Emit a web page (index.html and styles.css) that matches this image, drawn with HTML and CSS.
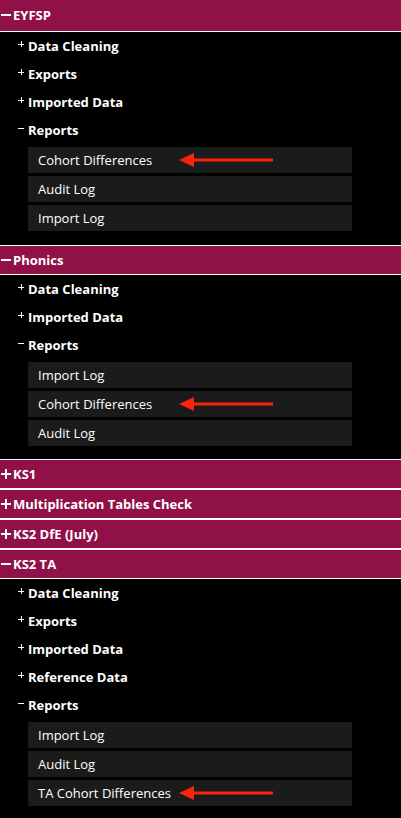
FILE: index.html
```html
<!DOCTYPE html>
<html lang="en">
<head>
    <meta charset="UTF-8">
    <meta name="viewport" content="width=device-width, initial-scale=1.0">
    <title>Data Menu</title>
    <link rel="stylesheet" href="styles.css">
</head>
<body>
    <div class="tree">
        <div class="section open first">
            <div class="section-head"><span class="toggle minus"></span>EYFSP</div>
            <div class="section-body">
                <div class="node"><span class="sign plus"></span>Data Cleaning</div>
                <div class="node"><span class="sign plus"></span>Exports</div>
                <div class="node"><span class="sign plus"></span>Imported Data</div>
                <div class="node"><span class="sign minus"></span>Reports</div>
                <div class="links">
                    <a class="link">Cohort Differences<svg class="pointer" width="94" height="14" viewBox="0 0 94 14"><polygon points="0,7 15,0 15,14"/><rect x="14" y="5.5" width="80" height="3"/></svg></a>
                    <a class="link">Audit Log</a>
                    <a class="link">Import Log</a>
                </div>
            </div>
        </div>
        <div class="section open">
            <div class="section-head"><span class="toggle minus"></span>Phonics</div>
            <div class="section-body">
                <div class="node"><span class="sign plus"></span>Data Cleaning</div>
                <div class="node"><span class="sign plus"></span>Imported Data</div>
                <div class="node"><span class="sign minus"></span>Reports</div>
                <div class="links">
                    <a class="link">Import Log</a>
                    <a class="link">Cohort Differences<svg class="pointer" width="94" height="14" viewBox="0 0 94 14"><polygon points="0,7 15,0 15,14"/><rect x="14" y="5.5" width="80" height="3"/></svg></a>
                    <a class="link">Audit Log</a>
                </div>
            </div>
        </div>
        <div class="section">
            <div class="section-head"><span class="toggle plus"></span>KS1</div>
        </div>
        <div class="section">
            <div class="section-head"><span class="toggle plus"></span>Multiplication Tables Check</div>
        </div>
        <div class="section">
            <div class="section-head"><span class="toggle plus"></span>KS2 DfE (July)</div>
        </div>
        <div class="section open">
            <div class="section-head"><span class="toggle minus"></span>KS2 TA</div>
            <div class="section-body">
                <div class="node"><span class="sign plus"></span>Data Cleaning</div>
                <div class="node"><span class="sign plus"></span>Exports</div>
                <div class="node"><span class="sign plus"></span>Imported Data</div>
                <div class="node"><span class="sign plus"></span>Reference Data</div>
                <div class="node"><span class="sign minus"></span>Reports</div>
                <div class="links">
                    <a class="link">Import Log</a>
                    <a class="link">Audit Log</a>
                    <a class="link">TA Cohort Differences<svg class="pointer" width="94" height="14" viewBox="0 0 94 14"><polygon points="0,7 15,0 15,14"/><rect x="14" y="5.5" width="80" height="3"/></svg></a>
                </div>
            </div>
        </div>
    </div>
</body>
</html>
```

FILE: styles.css
```css
body {
    margin: 0;
    background: #000;
    color: #fff;
    font-family: "Open Sans", "DejaVu Sans", sans-serif;
    font-size: 13px;
}
.section-head {
    position: relative;
    height: 28px;
    line-height: 29px;
    padding-left: 13px;
    background: #8f1147;
    border-top: 1px solid #fff;
    border-bottom: 1px solid #fff;
    font-weight: 700;
}
.first .section-head {
    border-top-color: #8f1147;
    padding-bottom: 2px;
}
.section-body {
    padding-bottom: 13px;
}
.first .section-body {
    padding-bottom: 14px;
}
/* section +/- drawn with two bars */
.toggle {
    position: absolute;
    left: 1px;
    top: 9px;
    width: 10px;
    height: 10px;
}
.toggle::before,
.toggle::after {
    content: "";
    position: absolute;
    background: #fff;
}
.toggle::before {
    left: 0;
    top: 4px;
    width: 10px;
    height: 2px;
}
.toggle.plus::after {
    left: 4px;
    top: 0;
    width: 2px;
    height: 10px;
}
.node {
    position: relative;
    height: 28px;
    line-height: 29px;
    padding-left: 28px;
    font-weight: 700;
}
.sign {
    position: absolute;
    left: 18px;
    top: 9px;
    width: 6px;
    height: 6px;
}
.sign::before,
.sign::after {
    content: "";
    position: absolute;
    background: #fff;
}
.sign::before {
    left: 0;
    top: 2.5px;
    width: 6px;
    height: 1px;
}
.sign.plus::after {
    left: 2.5px;
    top: 0;
    width: 1px;
    height: 6px;
}
.links {
    display: flex;
    flex-direction: column;
    gap: 3px;
    margin: 3px 0 0 28px;
    width: 324px;
}
.link {
    position: relative;
    display: block;
    height: 26px;
    line-height: 27px;
    padding-left: 10px;
    background: #1b1b1b;
}
.pointer {
    position: absolute;
    left: 151px;
    top: 6px;
    fill: #f8240c;
}
```
